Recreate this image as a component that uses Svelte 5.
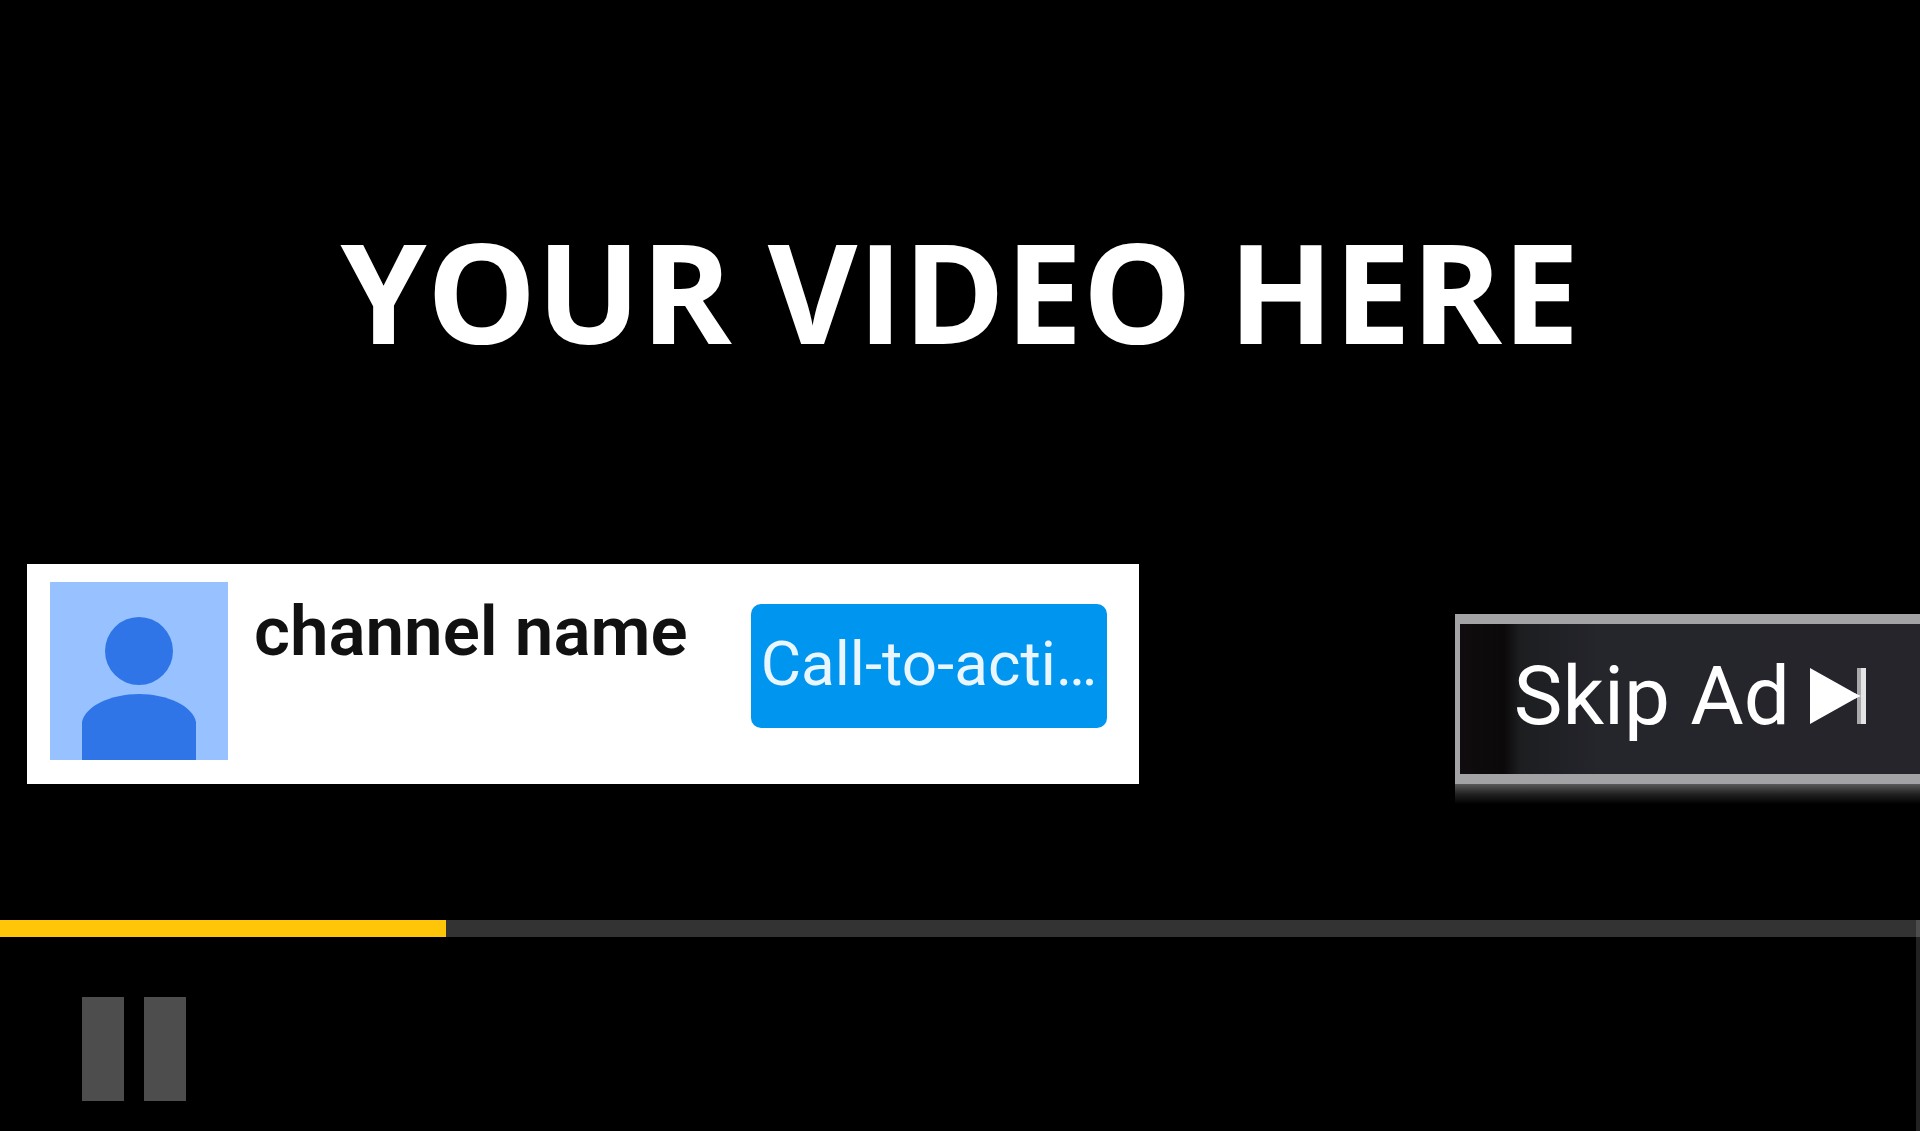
<script>
  let title = 'YOUR VIDEO HERE';
  let channel = 'channel name';
  let action = 'Call-to-acti…';
  let progress = 23.3;
</script>

<main class="player">
  <h1 class="title">{title}</h1>

  <div class="overlays">
    <section class="card">
      <svg class="avatar" viewBox="0 0 178 178" aria-hidden="true">
        <rect width="178" height="178" fill="#98c2ff" />
        <circle cx="89" cy="69" r="34" fill="#2f75e8" />
        <path d="M32 178V140C35 124 61 112 89 112S143 124 146 140V178Z" fill="#2f75e8" />
      </svg>
      <span class="channel">{channel}</span>
      <button class="action">{action}</button>
    </section>

    <button class="skip">
      <span>Skip Ad</span>
      <svg class="skip-icon" viewBox="0 0 56 56" aria-hidden="true">
        <path d="M0 0L50 28L0 56Z" fill="#fff" />
        <path d="M47 0H56V56H47Z" fill="#a9a9ab" />
        <path d="M51 0H56V56H51Z" fill="#e4e4e5" />
        <path d="M44 25L51 28L44 31Z" fill="#fff" />
      </svg>
    </button>
  </div>

  <div class="controls">
    <div class="track">
      <div class="played" style="width: {progress}%"></div>
    </div>
    <button class="pause" aria-label="Pause">
      <svg viewBox="0 0 104 104" aria-hidden="true">
        <path d="M0 0H42V104H0ZM62 0H104V104H62Z" fill="#4d4d4d" />
      </svg>
    </button>
  </div>
</main>

<style>
  :global(body) {
    background: #000;
  }

  .player {
    display: flex;
    flex-direction: column;
    min-height: 100vh;
    overflow: hidden;
    background: #000;
    font-family: Roboto, 'Liberation Sans', sans-serif;
  }

  .title {
    margin: 0;
    padding-top: 206px;
    color: #fff;
    font-family: 'Open Sans', 'Noto Sans', sans-serif;
    font-size: 138px;
    font-weight: 700;
    line-height: 168px;
    text-align: center;
    white-space: nowrap;
  }

  .overlays {
    display: flex;
    justify-content: space-between;
    align-items: flex-end;
    margin-top: 190px;
    padding-left: 27px;
  }

  .card {
    display: flex;
    align-items: flex-start;
    box-sizing: border-box;
    width: 1112px;
    padding: 18px 32px 24px 23px;
    background: #fff;
  }

  .avatar {
    flex: 0 0 auto;
    width: 178px;
    height: 178px;
  }

  .channel {
    flex: 1 1 auto;
    padding: 10px 0 0 26px;
    color: #111;
    font-size: 69px;
    font-weight: 600;
    line-height: 80px;
    white-space: nowrap;
  }

  .action {
    flex: 0 0 auto;
    width: 356px;
    height: 124px;
    margin-top: 22px;
    padding: 0 0 6px;
    border: 0;
    border-radius: 10px;
    background: #0096ef;
    color: #eaf6ff;
    font: 400 62px Roboto, 'Liberation Sans', sans-serif;
    white-space: nowrap;
  }

  .skip {
    position: relative;
    display: flex;
    align-items: center;
    gap: 20px;
    box-sizing: border-box;
    height: 170px;
    padding: 0 54px 6px;
    border: solid #a3a2a4;
    border-width: 10px 0 10px 5px;
    background: linear-gradient(90deg, #100c0f 0, #0b090a 44px, #1c1e20 60px, #25252c 140px, #25252b 100%);
    color: #fff;
    font: 400 82px Roboto, 'Liberation Sans', sans-serif;
    white-space: nowrap;
  }

  /* soft reflection under the button */
  .skip::after {
    position: absolute;
    top: 160px;
    left: -5px;
    right: 0;
    height: 20px;
    background: linear-gradient(#5a595b, #222 50%, #000);
    content: '';
  }

  .skip-icon {
    width: 56px;
    height: 56px;
  }

  .controls {
    flex: 1 0 auto;
    margin-top: 136px;
    border-right: 4px solid #222;
  }

  .track {
    height: 17px;
    margin-right: -4px;
    border-right: 4px solid #4d4d4d;
    background: #333;
  }

  .played {
    height: 100%;
    background: #ffc609;
  }

  .pause {
    display: block;
    margin: 60px 0 0 82px;
    padding: 0;
    border: 0;
    background: none;
  }

  .pause svg {
    display: block;
    width: 104px;
    height: 104px;
  }
</style>
